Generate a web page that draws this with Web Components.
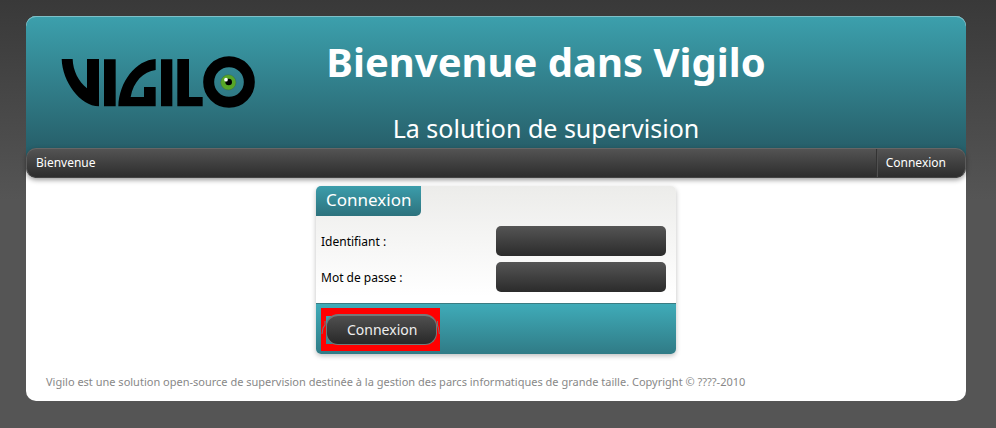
<!DOCTYPE html>
<html lang="fr">
<head>
<meta charset="utf-8">
<title>Vigilo</title>
<style>
html { min-height: 100%; background: #555; }
body { margin: 0; padding: 16px 30px 27px 26px; font-family: "Noto Sans", "Open Sans", sans-serif; font-size: 12px; background: linear-gradient(#393939, #555 200px); }
</style>
</head>
<body>
<vigilo-page>
  <vigilo-header slot="header" heading="Bienvenue dans Vigilo" tagline="La solution de supervision"></vigilo-header>
  <vigilo-nav slot="nav"><span>Bienvenue</span><a slot="end" href="#login">Connexion</a></vigilo-nav>
  <login-card id="login" heading="Connexion"></login-card>
  <span slot="footer">Vigilo est une solution open-source de supervision destinée à la gestion des parcs informatiques de grande taille. Copyright © ????-2010</span>
</vigilo-page>
<script>
class Base extends HTMLElement {
  connectedCallback() {
    if (this.shadowRoot) return;
    this.attachShadow({ mode: "open" }).innerHTML = this.render();
  }
}

customElements.define("vigilo-page", class extends Base {
  render() { return `
<style>
:host { display: block; background: #fff; border-radius: 10px; }
main { display: flex; justify-content: center; padding: 8px 0 20px; }
footer { padding: 0 20px 11px; font-size: 11px; line-height: 16px; color: #888; }
</style>
<slot name="header"></slot><slot name="nav"></slot>
<main><slot></slot></main>
<footer><slot name="footer"></slot></footer>`; }
});

customElements.define("vigilo-logo", class extends Base {
  render() { return `
<style>:host { display: block; } svg { display: block; width: 200px; height: 55px; }</style>
<svg viewBox="60 45 600 165" role="img" aria-label="Vigilo">
  <path d="M65 57H98C99 92 115 124 141 145V57H177V199C120 198 67 125 65 57ZM192 58H227V199H192ZM235 199C237 125 288 60 347 57V90C310 95 280 125 272 171H312V141H347V199ZM363 58H397V199H363ZM412 57H447V171H488V199H412Z"/>
  <circle cx="567" cy="126" r="61" fill="none" stroke="#000" stroke-width="33"/>
  <circle cx="565" cy="127" r="23" fill="#57a627" stroke="#3b6b4b" stroke-width="1.5"/>
  <circle cx="566" cy="126" r="10"/>
  <circle cx="558" cy="119" r="5.5" fill="#fff"/>
</svg>`; }
});

customElements.define("vigilo-header", class extends Base {
  render() { return `
<style>
:host { display: grid; grid-template-columns: 266px 1fr 166px; color: #fff; padding: 0 34px 18px; margin-bottom: -15px; border-radius: 10px 10px 0 0; background: linear-gradient(#3ca0ad, #27606b 132px); box-shadow: inset 0 1px #7fc0c8; }
vigilo-logo { padding-top: 39px; width: 200px; }
.titles { text-align: center; white-space: nowrap; }
h1 { margin: 20px 0 0; font-size: 40px; line-height: 52px; font-weight: 700; }
p { margin: 24px 0 0; font-size: 25px; line-height: 33px; }
</style>
<vigilo-logo></vigilo-logo>
<div class="titles"><h1>${this.getAttribute("heading")}</h1><p>${this.getAttribute("tagline")}</p></div>`; }
});

customElements.define("vigilo-nav", class extends Base {
  render() { return `
<style>
:host { display: flex; justify-content: space-between; position: relative; line-height: 30px; color: #fff; border-radius: 10px; overflow: hidden; background: linear-gradient(#555, #2b2b2b); box-shadow: 0 2px 5px rgba(0,0,0,.4); }
:host::after { content: ""; position: absolute; inset: 0; border: 1px solid #5c5c5c; border-top-color: #666; border-bottom-color: #444; border-radius: 10px; pointer-events: none; }
.start { padding-left: 10px; }
.end { padding: 0 20px 0 8px; border-left: 1px solid #505050; box-shadow: -1px 0 #333; }
::slotted(a) { color: inherit; text-decoration: none; }
</style>
<div class="start"><slot></slot></div><div class="end"><slot name="end"></slot></div>`; }
});

customElements.define("glossy-button", class extends Base {
  render() { return `
<style>
:host { display: inline-block; padding: 6px 3px 6px 5px; position: relative;
  background: linear-gradient(#3ba1ae, #338894) 5px 8px / 14px 28px no-repeat, #f00; }
svg { position: absolute; inset: 0; width: 100%; height: 100%; }
button { position: relative; display: block; font: inherit; font-size: 14px; line-height: 29px; color: #eee; padding: 0 19px 0 20px; border: 1px solid #6c7a7a; border-top: 2px solid #777; border-radius: 12px; line-height: 28px; background: linear-gradient(#505050, #282828); background-clip: border-box; }
</style>
<svg viewBox="0 0 119 43" preserveAspectRatio="none" fill="none" stroke="#777" aria-hidden="true"><path d="M1 26L2 20L4 17V13M118 26L117 20L116 17V13"/></svg>
<button type="button"><slot></slot></button>`; }
});

customElements.define("login-card", class extends Base {
  render() { return `
<style>
:host { display: block; width: 360px; border-radius: 5px; overflow: hidden; background: linear-gradient(#ececea, #fff 110px); box-shadow: 0 2px 5px rgba(0,0,0,.25); color: #000; }
form { margin: 0; }
h2 { display: table; margin: 0; padding: 0 10px 2px; font-size: 17px; line-height: 28px; font-weight: 400; color: #fff; background: linear-gradient(#3c9dab, #2d727d); border-radius: 0 0 5px 0; }
.fields { display: grid; grid-template-columns: 1fr 170px; row-gap: 6px; padding: 10px 10px 11px 5px; align-items: center; }
input { box-sizing: border-box; width: 100%; height: 30px; border: 0; border-radius: 5px; padding: 0 8px; font: inherit; color: #fff; background: linear-gradient(#555, #2b2b2b); }
.actions { padding: 4px 5px 3px; display: flex; border-top: 1px solid #3a7c82; background: linear-gradient(#3fabb8, #307b86); }
</style>
<form>
  <h2>${this.getAttribute("heading")}</h2>
  <div class="fields">
    <label for="user">Identifiant :</label><input id="user" type="text">
    <label for="pass">Mot de passe :</label><input id="pass" type="password">
  </div>
  <div class="actions"><glossy-button>Connexion</glossy-button></div>
</form>`; }
});
</script>
</body>
</html>
